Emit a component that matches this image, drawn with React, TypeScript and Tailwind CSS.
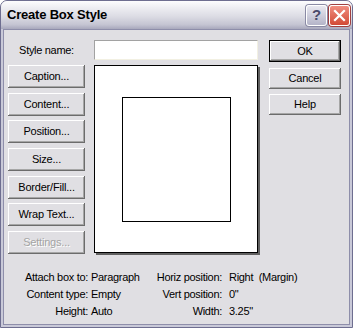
import React from 'react';

const font = { fontFamily: '"Liberation Sans", Arial, sans-serif' };

const Btn: React.FC<{ label: string; disabled?: boolean; isDefault?: boolean; className?: string }> = ({
  label,
  disabled,
  isDefault,
  className = '',
}) => (
  <div
    className={`flex items-center justify-center bg-[#e0dfe3] text-[11px] leading-none tracking-[-0.2px] ${
      isDefault
        ? 'border border-black shadow-[inset_-1px_-1px_#6c6c6c,inset_1px_1px_#ffffff,inset_-2px_-2px_#a6a6a6]'
        : 'shadow-[inset_-1px_-1px_#6c6c6c,inset_1px_1px_#ffffff,inset_-2px_-2px_#a6a6a6]'
    } ${disabled ? 'text-[#a4a4a4] [text-shadow:1px_1px_0_#ffffff]' : 'text-black'} ${className}`}
  >
    {label}
  </div>
);

const InfoRow: React.FC<{ l1: string; v1: string; l2: string; v2: string }> = ({ l1, v1, l2, v2 }) => (
  <div className="flex h-[17px] items-center text-[11px] tracking-[-0.3px] text-black">
    <span className="w-[84px] text-right">{l1}</span>
    <span className="ml-[3px] w-[55px]">{v1}</span>
    <span className="w-[76px] text-right">{l2}</span>
    <span className="ml-[7px] whitespace-pre">{v2}</span>
  </div>
);

export default function App() {
  const leftButtons = ['Caption...', 'Content...', 'Position...', 'Size...', 'Border/Fill...', 'Wrap Text...'];

  return (
    <div style={font} className="w-[353px] h-[328px] bg-white">
      <div className="flex h-full w-full flex-col rounded-t-[7px] border border-[#6e6e90] bg-[#c9c9d8]">
        {/* Title bar */}
        <div className="flex h-[28px] shrink-0 items-center rounded-t-[6px] bg-[linear-gradient(to_bottom,#fdfdfe_0%,#f0f0f4_20%,#dcdce4_55%,#c4c4d2_85%,#a8a8bc_100%)] pl-[6px] pr-[2px]">
          <span className="flex-1 text-[13px] font-bold tracking-[-0.2px] text-black">Create Box Style</span>
          <div className="flex gap-[2px]">
            <div className="flex h-[21px] w-[21px] items-center justify-center rounded-[3px] border border-white bg-[linear-gradient(to_bottom,#e8e8f0,#b4b4c8)] text-[15px] font-bold text-[#4a4a6a] shadow-[0_0_0_1px_#8a8aa4]">
              ?
            </div>
            <div className="flex h-[21px] w-[21px] items-center justify-center rounded-[3px] border border-white bg-[linear-gradient(to_bottom,#f08e80,#d24a36)] shadow-[0_0_0_1px_#a04040]">
              <svg width="13" height="13" viewBox="0 0 13 13">
                <path d="M2 2 L11 11 M11 2 L2 11" stroke="#ffffff" strokeWidth="2.2" strokeLinecap="square" />
              </svg>
            </div>
          </div>
        </div>

        {/* Client area */}
        <div className="mx-[2px] mb-[2px] flex-1 border border-[#8e8eaa] bg-[#e0dfe3]">
          <div className="flex pt-[10px] pl-[4px]">
            <div className="flex flex-col">
              <div className="flex h-[20px] items-center">
                <span className="w-[77px] text-center text-[11px] tracking-[-0.3px] text-black">Style name:</span>
                <div className="ml-[9px] h-[20px] w-[164px] border-t border-l border-t-[#a2a2a2] border-l-[#a2a2a2] border-b border-r border-b-[#f2f0e2] border-r-[#f2f0e2] bg-white" />
              </div>
              <div className="mt-[5px] flex">
                <div className="flex w-[77px] flex-col gap-[4.7px]">
                  {leftButtons.map((b) => (
                    <Btn key={b} label={b} className="h-[23px]" />
                  ))}
                  <Btn label="Settings..." disabled className="h-[23px]" />
                </div>
                <div className="ml-[9px] flex h-[188px] w-[164px] items-center justify-center border border-black bg-white shadow-[2px_2px_0_#606060]">
                  <div className="h-[125px] w-[109px] border border-black" />
                </div>
              </div>
            </div>
            <div className="ml-[11px] flex w-[72px] flex-col gap-[5.5px]">
              <Btn label="OK" isDefault className="h-[22px]" />
              <Btn label="Cancel" className="h-[21px]" />
              <Btn label="Help" className="h-[21px]" />
            </div>
          </div>

          <div className="mt-[15px] flex flex-col">
            <InfoRow l1="Attach box to:" v1="Paragraph" l2="Horiz position:" v2="Right  (Margin)" />
            <InfoRow l1="Content type:" v1="Empty" l2="Vert position:" v2={'0"'} />
            <InfoRow l1="Height:" v1="Auto" l2="Width:" v2={'3.25"'} />
          </div>
        </div>
      </div>
    </div>
  );
}
